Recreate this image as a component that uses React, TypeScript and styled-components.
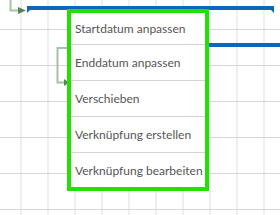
import React from 'react';
import styled, { createGlobalStyle } from 'styled-components';

const GlobalStyle = createGlobalStyle`
  html, body {
    margin: 0;
    padding: 0;
    background: #ffffff;
    overflow: hidden;
  }
`;

const menuItems = [
  'Startdatum anpassen',
  'Enddatum anpassen',
  'Verschieben',
  'Verknüpfung erstellen',
  'Verknüpfung bearbeiten',
];

// one entry per gantt row, bar start / length in px on the timeline
const rows: { start: number; length: number; milestone?: boolean }[] = [
  { start: 27, length: 247, milestone: true },
  { start: 200, length: 90 },
  { start: 0, length: 0 },
  { start: 0, length: 0 },
  { start: 0, length: 0 },
  { start: 0, length: 0 },
  { start: 0, length: 0 },
];

const App = () => {
  return (
    <>
      <GlobalStyle />
      <Chart>
        <Rows>
          {rows.map((r, i) => (
            <Row key={i} $first={i === 0}>
              {r.length > 0 && (
                <Bar $ticks={r.milestone} style={{ marginLeft: r.start, width: r.length }} />
              )}
            </Row>
          ))}
        </Rows>
        <Links width={280} height={215} viewBox="0 0 280 215">
          <path d="M10.5 0 V10.5 H19" fill="none" stroke="#a9c0a9" strokeWidth="2" />
          <path d="M18 7 L26 10.5 L18 14 Z" fill="#55865a" />
          <path d="M68 48 H57.5 V82.5 H64" fill="none" stroke="#a9c0a9" strokeWidth="2" />
          <path d="M64 79 L69 82.5 L64 86 Z" fill="#55865a" />
        </Links>
        <Menu>
          {menuItems.map((label) => (
            <MenuItem key={label}>{label}</MenuItem>
          ))}
        </Menu>
      </Chart>
    </>
  );
};

export default App;

const Chart = styled.div`
  position: relative;
  width: 280px;
  height: 215px;
  overflow: hidden;
  background-color: #ffffff;
  background-image: linear-gradient(to right, #efefef 0 2px, transparent 2px);
  background-size: 27px 100%;
  background-position: 20px 0;
`;

const Rows = styled.div`
  display: flex;
  flex-direction: column;
  margin-top: -6px;
`;

const Row = styled.div<{ $first?: boolean }>`
  flex-shrink: 0;
  display: flex;
  align-items: flex-start;
  box-sizing: border-box;
  padding-top: ${(p) => (p.$first ? 12 : 13)}px;
  height: 36px;
  border-bottom: 1px solid #d6d6d6;
`;

const Bar = styled.div<{ $ticks?: boolean }>`
  position: relative;
  flex-shrink: 0;
  height: 4px;
  background: #0f66b4;
  &::before,
  &::after {
    content: '';
    display: ${(p) => (p.$ticks ? 'block' : 'none')};
    position: absolute;
    top: 4px;
    width: 0;
    height: 0;
    border-top: 3px solid #0f66b4;
  }
  &::before {
    left: 0;
    border-right: 3px solid transparent;
  }
  &::after {
    right: 0;
    border-left: 3px solid transparent;
  }
`;

const Links = styled.svg`
  position: absolute;
  left: 0;
  top: 0;
`;

const Menu = styled.div`
  position: absolute;
  left: 67px;
  top: 9px;
  width: 142px;
  box-sizing: border-box;
  border: 4px solid #24e000;
  background: #ffffff;
  display: flex;
  flex-direction: column;
`;

const MenuItem = styled.div`
  height: 35px;
  display: flex;
  align-items: center;
  padding-left: 4px;
  border-bottom: 1px solid #d3d3d3;
  font-family: Lato, 'Open Sans', sans-serif;
  font-size: 12px;
  color: #555555;
  white-space: nowrap;
  cursor: default;
  &:first-child {
    height: 31px;
  }
  &:last-child {
    height: 34px;
    border-bottom: none;
  }
`;
